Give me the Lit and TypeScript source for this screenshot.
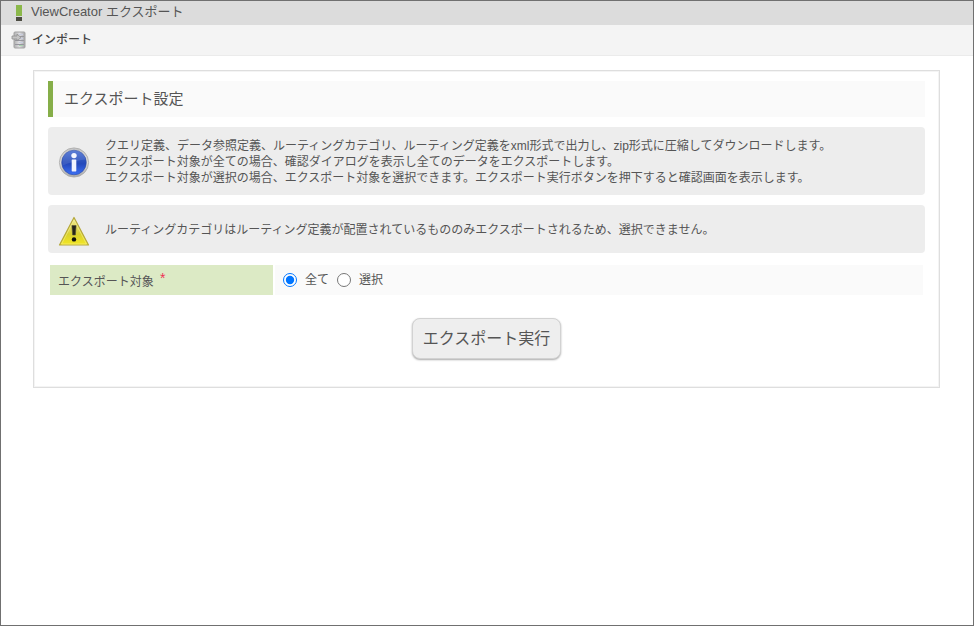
import { LitElement, html, css, svg } from "lit";
import { customElement, state } from "lit/decorators.js";

const importIcon = html`<svg class="import-icon" viewBox="0 0 16 18" aria-hidden="true">
  <defs>
    <linearGradient id="srv" x1="0" x2="1" y1="0" y2="0">
      <stop offset="0" stop-color="#b0b0b0" />
      <stop offset="0.5" stop-color="#dfdfe2" />
      <stop offset="1" stop-color="#a4a4a7" />
    </linearGradient>
  </defs>
  <rect x="3" y="1" width="11" height="16" rx="1" fill="url(#srv)" stroke="#a2a2a2" />
  ${[5, 9, 13].map(
    (y) => svg`<path d="M4 ${y}.5H13" stroke="#96969e" /><path d="M8 ${y - 2}.5H12" stroke="#c7ccdf" />`
  )}
  <path d="M8 14.5H12" stroke="#a9d3ad" />
  <path d="M1 5H6V3L10 6.5L6 10V8H1Z" fill="#c4c4c4" stroke="#8f8f8f" stroke-width="0.8" />
</svg>`;

const infoIcon = html`<svg class="notice-icon" viewBox="0 0 32 32" aria-hidden="true">
  <defs>
    <linearGradient id="ring" x1="0" x2="0" y1="0" y2="1">
      <stop offset="0" stop-color="#c4c4c4" />
      <stop offset="0.5" stop-color="#dedede" />
      <stop offset="1" stop-color="#a9a9a9" />
    </linearGradient>
    <linearGradient id="blue" x1="0" x2="0" y1="0" y2="1">
      <stop offset="0" stop-color="#4a70d2" />
      <stop offset="0.45" stop-color="#2a50bd" />
      <stop offset="0.55" stop-color="#2449bb" />
      <stop offset="1" stop-color="#3c70f5" />
    </linearGradient>
  </defs>
  <circle cx="16" cy="16.5" r="14.6" fill="url(#ring)" stroke="#a8a8a8" stroke-width="0.8" />
  <circle cx="16" cy="16.5" r="12.3" fill="url(#blue)" stroke="#2f4ca3" stroke-width="0.6" />
  <path d="M4.5 16.5A11.5 11.5 0 0 1 27.5 13.5Q17 14.5 4.5 19.5Z" fill="#fff" opacity="0.1" />
  <circle cx="16" cy="9.6" r="2.7" fill="#f5f7ff" />
  <rect x="13.7" y="13.4" width="4.6" height="12" rx="0.6" fill="#f0f3ff" />
</svg>`;

const warningIcon = html`<svg class="notice-icon" viewBox="0 -1 32 32" aria-hidden="true">
  <defs>
    <linearGradient id="yellow" x1="0" x2="0" y1="0" y2="1">
      <stop offset="0" stop-color="#f1eb91" />
      <stop offset="0.5" stop-color="#ded547" />
      <stop offset="0.6" stop-color="#d9d12d" />
      <stop offset="1" stop-color="#f3e724" />
    </linearGradient>
  </defs>
  <path d="M16 2.5L30.5 30H1.5Z" fill="url(#yellow)" stroke="#b5a83c" stroke-width="1.2" stroke-linejoin="round" />
  <path d="M16 5L28.5 29H3.5Z" fill="none" stroke="#f8f3a0" stroke-width="0.7" opacity="0.7" />
  <path d="M13.9 10.5H18.1L17.4 20H14.6Z" fill="#262619" stroke="#55523a" stroke-width="0.6" stroke-linejoin="round" />
  <circle cx="16" cy="24.4" r="2.2" fill="#11110c" />
</svg>`;

@customElement("app-root")
export class AppRoot extends LitElement {
  @state() private target = "all";

  static styles = css`
    :host {
      display: block;
      box-sizing: border-box;
      min-height: 100vh;
      border: 1px solid #707070;
      background: #fff;
      color: #555;
      font: 12px/16px "Liberation Sans", "Noto Sans CJK JP", sans-serif;
    }
    .title-bar {
      display: flex;
      align-items: center;
      gap: 9px;
      height: 24px;
      padding: 0 15px;
      background: #dcdcdc;
    }
    .mark {
      width: 6px;
      height: 16px;
      background: linear-gradient(#8bb84a 0 11px, #dcdcdc 11px 12px, #4c4c42 12px);
    }
    .title {
      margin: 0;
      font-size: 13px;
      font-weight: 400;
      line-height: 22px;
      align-self: flex-start;
    }
    .toolbar {
      padding: 6px 10px;
      background: #f4f4f4;
      border-bottom: 1px solid #ebebeb;
    }
    .tool-link {
      display: inline-flex;
      align-items: center;
      gap: 5px;
      color: #444;
      font-weight: 500;
      line-height: 18px;
      vertical-align: top;
      text-decoration: none;
    }
    .import-icon {
      width: 16px;
      height: 18px;
    }
    .panel {
      margin: 14px 33px 14px 32px;
      padding: 10px 14px 28px;
      border: 1px solid #dedede;
      outline: 1px solid #f4f4f4;
      outline-offset: -2px;
    }
    .heading {
      margin: 0 0 10px;
      padding: 0 11px;
      border-left: 5px solid #86ae49;
      background: #fafafa;
      font-size: 15px;
      font-weight: 400;
      line-height: 36px;
    }
    .notice {
      display: flex;
      align-items: center;
      gap: 15px;
      margin-bottom: 10px;
      padding: 9px 10px 7px;
      border-radius: 4px;
      background: #ededed;
    }
    .notice-icon {
      flex: none;
      width: 32px;
      height: 32px;
    }
    .notice-text {
      margin: 0;
    }
    .info {
      padding: 11px 10px 9px;
    }
    .settings {
      width: 100%;
      border-spacing: 2px;
      margin-bottom: 21px;
    }
    .settings th,
    .settings td {
      box-sizing: border-box;
      height: 30px;
      padding: 0 8px;
      text-align: left;
      font-weight: 400;
      line-height: 14px;
    }
    .settings th {
      width: 223px;
      background: #dceac5;
    }
    .settings td {
      background: #fafafa;
    }
    .required {
      margin-left: 3px;
      color: #ee3355;
      font-size: 14px;
      line-height: 1;
      vertical-align: 3px;
    }
    .choices {
      display: flex;
      gap: 8px;
    }
    .choice {
      display: flex;
      align-items: center;
      gap: 8px;
    }
    .choice input {
      width: 14px;
      height: 14px;
      margin: 0;
    }
    .actions {
      text-align: center;
    }
    .submit {
      padding: 0 10px;
      border: 1px solid #d2d2d2;
      border-radius: 8px;
      background: #eee;
      box-shadow: 0 1px 2px #aaa;
      color: #555;
      font: inherit;
      font-size: 16px;
      line-height: 39px;
    }
  `;

  private choice(value: string, label: string) {
    return html`<label class="choice">
      <input
        type="radio"
        name="target"
        .value=${value}
        .checked=${this.target === value}
        @change=${() => (this.target = value)}
      />${label}
    </label>`;
  }

  render() {
    return html`
      <header>
        <div class="title-bar">
          <span class="mark"></span>
          <h1 class="title">ViewCreator エクスポート</h1>
        </div>
        <nav class="toolbar">
          <a class="tool-link" href="#import">${importIcon}インポート</a>
        </nav>
      </header>
      <main class="panel">
        <h2 class="heading">エクスポート設定</h2>
        <div class="notice info">
          ${infoIcon}
          <p class="notice-text">
            クエリ定義、データ参照定義、ルーティングカテゴリ、ルーティング定義をxml形式で出力し、zip形式に圧縮してダウンロードします。<br />
            エクスポート対象が全ての場合、確認ダイアログを表示し全てのデータをエクスポートします。<br />
            エクスポート対象が選択の場合、エクスポート対象を選択できます。エクスポート実行ボタンを押下すると確認画面を表示します。
          </p>
        </div>
        <div class="notice">
          ${warningIcon}
          <p class="notice-text">
            ルーティングカテゴリはルーティング定義が配置されているもののみエクスポートされるため、選択できません。
          </p>
        </div>
        <table class="settings">
          <tr>
            <th scope="row" id="target-label">エクスポート対象 <span class="required">*</span></th>
            <td>
              <div class="choices" role="radiogroup" aria-labelledby="target-label">
                ${this.choice("all", "全て")} ${this.choice("selected", "選択")}
              </div>
            </td>
          </tr>
        </table>
        <div class="actions">
          <button class="submit" type="button">エクスポート実行</button>
        </div>
      </main>
    `;
  }
}
